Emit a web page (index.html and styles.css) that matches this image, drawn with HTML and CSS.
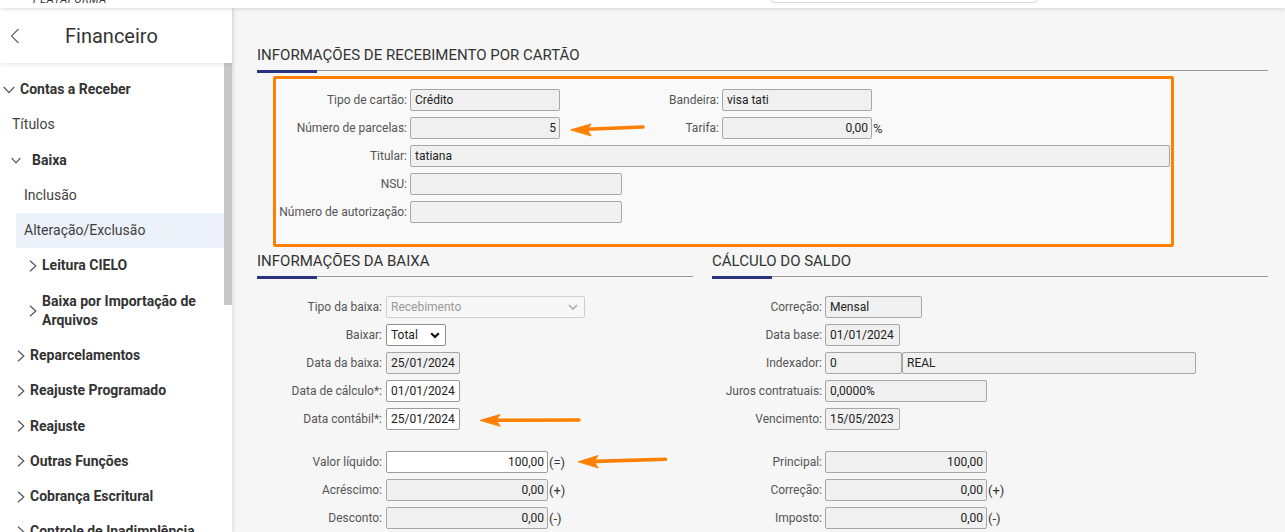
FILE: index.html
```html
<!DOCTYPE html>
<html lang="pt-BR">
<head>
<meta charset="utf-8">
<title>Financeiro</title>
<link rel="stylesheet" href="styles.css">
</head>
<body>
<header class="topbar">
  <span class="brand">PLATAFORMA</span>
  <div class="search"></div>
</header>
<div class="layout">
  <aside class="sidebar">
    <div class="side-head">
      <svg class="back" width="10" height="16" viewBox="0 0 10 16"><path d="M8.5 1 L1.5 8 L8.5 15" fill="none" stroke="#666" stroke-width="1.2"/></svg>
      <span class="side-title">Financeiro</span>
    </div>
    <div class="menu">
      <ul class="menu-list">
        <li class="item bold lv0"><svg class="chev-d" width="12" height="8" viewBox="0 0 12 8"><path d="M0.8 1 L6 6.6 L11.2 1" fill="none" stroke="#555" stroke-width="1.2"/></svg>Contas a Receber</li>
        <li class="item lv1">Títulos</li>
        <li class="item bold lv1b"><svg class="chev-d sm" width="10" height="7" viewBox="0 0 10 7"><path d="M0.7 1 L5 5.8 L9.3 1" fill="none" stroke="#555" stroke-width="1.2"/></svg>Baixa</li>
        <li class="item lv2">Inclusão</li>
        <li class="item lv2 active">Alteração/Exclusão</li>
        <li class="item bold lv3"><svg class="chev-r" width="8" height="12" viewBox="0 0 8 12"><path d="M1 0.8 L6.8 6 L1 11.2" fill="none" stroke="#555" stroke-width="1.2"/></svg>Leitura CIELO</li>
        <li class="item bold lv3"><svg class="chev-r" width="8" height="12" viewBox="0 0 8 12"><path d="M1 0.8 L6.8 6 L1 11.2" fill="none" stroke="#555" stroke-width="1.2"/></svg><span>Baixa por Importação de<br>Arquivos</span></li>
        <li class="item bold lv1c"><svg class="chev-r" width="8" height="12" viewBox="0 0 8 12"><path d="M1 0.8 L6.8 6 L1 11.2" fill="none" stroke="#555" stroke-width="1.2"/></svg>Reparcelamentos</li>
        <li class="item bold lv1c"><svg class="chev-r" width="8" height="12" viewBox="0 0 8 12"><path d="M1 0.8 L6.8 6 L1 11.2" fill="none" stroke="#555" stroke-width="1.2"/></svg>Reajuste Programado</li>
        <li class="item bold lv1c"><svg class="chev-r" width="8" height="12" viewBox="0 0 8 12"><path d="M1 0.8 L6.8 6 L1 11.2" fill="none" stroke="#555" stroke-width="1.2"/></svg>Reajuste</li>
        <li class="item bold lv1c"><svg class="chev-r" width="8" height="12" viewBox="0 0 8 12"><path d="M1 0.8 L6.8 6 L1 11.2" fill="none" stroke="#555" stroke-width="1.2"/></svg>Outras Funções</li>
        <li class="item bold lv1c"><svg class="chev-r" width="8" height="12" viewBox="0 0 8 12"><path d="M1 0.8 L6.8 6 L1 11.2" fill="none" stroke="#555" stroke-width="1.2"/></svg>Cobrança Escritural</li>
        <li class="item bold lv1c"><svg class="chev-r" width="8" height="12" viewBox="0 0 8 12"><path d="M1 0.8 L6.8 6 L1 11.2" fill="none" stroke="#555" stroke-width="1.2"/></svg>Controle de Inadimplência</li>
      </ul>
      <div class="track"><div class="thumb"></div></div>
    </div>
  </aside>

  <main class="main">
    <h2 class="sec-title">INFORMAÇÕES DE RECEBIMENTO POR CARTÃO</h2>
    <div class="card">
      <div class="row">
        <label class="lbl">Tipo de cartão:</label>
        <input class="field w150" readonly value="Crédito">
        <label class="lbl lbl2">Bandeira:</label>
        <input class="field w150" readonly value="visa tati">
      </div>
      <div class="row">
        <label class="lbl">Número de parcelas:</label>
        <input class="field w150 num" readonly value="5">
        <label class="lbl lbl2">Tarifa:</label>
        <input class="field w150 num" readonly value="0,00">
        <span class="suffix">%</span>
      </div>
      <div class="row">
        <label class="lbl">Titular:</label>
        <input class="field grow" readonly value="tatiana">
      </div>
      <div class="row">
        <label class="lbl">NSU:</label>
        <input class="field w212" readonly value="">
      </div>
      <div class="row">
        <label class="lbl">Número de autorização:</label>
        <input class="field w212" readonly value="">
      </div>
    </div>

    <div class="cols">
      <section class="col left">
        <h2 class="sec-title">INFORMAÇÕES DA BAIXA</h2>
        <div class="form">
          <div class="row">
            <label class="lbl">Tipo da baixa:</label>
            <div class="select disabled w198"><span>Recebimento</span><svg width="10" height="6" viewBox="0 0 10 6"><path d="M1 1 L5 5 L9 1" fill="none" stroke="#aaa" stroke-width="1.5"/></svg></div>
          </div>
          <div class="row">
            <label class="lbl">Baixar:</label>
            <div class="select w60"><span>Total</span><svg width="10" height="7" viewBox="0 0 10 7"><path d="M1.2 1.2 L5 5 L8.8 1.2" fill="none" stroke="#111" stroke-width="2.2"/></svg></div>
          </div>
          <div class="row">
            <label class="lbl">Data da baixa:</label>
            <input class="field w74" readonly value="25/01/2024">
          </div>
          <div class="row">
            <label class="lbl">Data de cálculo*:</label>
            <input class="field w74 white" value="01/01/2024">
          </div>
          <div class="row">
            <label class="lbl">Data contábil*:</label>
            <input class="field w74 white" value="25/01/2024">
          </div>
          <div class="row spaced">
            <label class="lbl">Valor líquido:</label>
            <input class="field w162 num white" value="100,00">
            <span class="suffix">(=)</span>
          </div>
          <div class="row">
            <label class="lbl">Acréscimo:</label>
            <input class="field w162 num" readonly value="0,00">
            <span class="suffix">(+)</span>
          </div>
          <div class="row">
            <label class="lbl">Desconto:</label>
            <input class="field w162 num" readonly value="0,00">
            <span class="suffix">(-)</span>
          </div>
        </div>
      </section>

      <section class="col right">
        <h2 class="sec-title">CÁLCULO DO SALDO</h2>
        <div class="form">
          <div class="row">
            <label class="lbl">Correção:</label>
            <input class="field w96" readonly value="Mensal">
          </div>
          <div class="row">
            <label class="lbl">Data base:</label>
            <input class="field w75" readonly value="01/01/2024">
          </div>
          <div class="row">
            <label class="lbl">Indexador:</label>
            <input class="field w77" readonly value="0">
            <input class="field w294" readonly value="REAL">
          </div>
          <div class="row">
            <label class="lbl">Juros contratuais:</label>
            <input class="field w162" readonly value="0,0000%">
          </div>
          <div class="row">
            <label class="lbl">Vencimento:</label>
            <input class="field w75" readonly value="15/05/2023">
          </div>
          <div class="row spaced">
            <label class="lbl">Principal:</label>
            <input class="field w162 num" readonly value="100,00">
          </div>
          <div class="row">
            <label class="lbl">Correção:</label>
            <input class="field w162 num" readonly value="0,00">
            <span class="suffix">(+)</span>
          </div>
          <div class="row">
            <label class="lbl">Imposto:</label>
            <input class="field w162 num" readonly value="0,00">
            <span class="suffix">(-)</span>
          </div>
        </div>
      </section>
    </div>
  </main>
</div>

<svg class="arrows" width="1285" height="532" viewBox="0 0 1285 532">
  <g fill="#ff8000" stroke="#ff8000" stroke-linecap="round" stroke-linejoin="round">
    <path d="M586 129.3 L643 127" stroke-width="3.6" fill="none"/>
    <path d="M571 129.8 L591 124 L587 129.6 L591 135.6 Z" stroke-width="1"/>
    <path d="M496 420.3 L579 420" stroke-width="3.6" fill="none"/>
    <path d="M480.5 420.3 L500 414.6 L496 420.3 L500 426 Z" stroke-width="1"/>
    <path d="M594 461.4 L665.5 459.2" stroke-width="3.6" fill="none"/>
    <path d="M578.5 461.7 L598 455.6 L594 461.5 L598 467.6 Z" stroke-width="1"/>
  </g>
</svg>
</body>
</html>
```

FILE: styles.css
```css
* { box-sizing: border-box; }

html, body {
  margin: 0;
  padding: 0;
}

body {
  width: 1285px;
  height: 532px;
  overflow: hidden;
  position: relative;
  background: #f6f6f6;
  color: #333;
  font-family: Roboto, "Liberation Sans", Arial, sans-serif;
}

/* ---------- top bar ---------- */
.topbar {
  position: relative;
  z-index: 3;
  height: 8px;
  background: #fff;
  box-shadow: 0 1px 4px rgba(0, 0, 0, 0.14);
  display: flex;
  padding-left: 33px;
  overflow: hidden;
}

.brand {
  font-size: 11px;
  font-style: italic;
  letter-spacing: 0.6px;
  line-height: 11px;
  margin-top: -6px;
  color: #333;
}

.search {
  margin-left: auto;
  margin-right: 248px;
  width: 266px;
  height: 23px;
  margin-top: -20px;
  border: 1px solid #dcdcdc;
  border-radius: 2px;
  background: #fff;
}

/* ---------- layout ---------- */
.layout {
  display: flex;
  height: 524px;
}

.sidebar {
  position: relative;
  z-index: 2;
  flex: none;
  width: 232px;
  background: #fff;
  box-shadow: 1px 0 4px rgba(0, 0, 0, 0.12);
  display: flex;
  flex-direction: column;
}

.side-head {
  position: relative;
  z-index: 1;
  flex: none;
  height: 55px;
  display: flex;
  align-items: center;
  box-shadow: 0 2px 4px rgba(0, 0, 0, 0.09);
}

.back {
  margin-left: 10px;
  flex: none;
}

.side-title {
  margin-left: 45px;
  font-size: 20px;
  color: #333;
}

.menu {
  flex: 1;
  display: grid;
  grid-template-columns: 224px 8px;
  overflow: hidden;
}

.menu-list {
  list-style: none;
  margin: 0;
  padding: 9px 0 0;
}

.track {
  background: #fff;
}

.thumb {
  height: 242px;
  background: #c8c8c8;
}

.item {
  display: flex;
  align-items: center;
  padding: 8px 0;
  line-height: 19.25px;
  font-size: 14px;
  color: #3f3f3f;
  white-space: nowrap;
}

.item.bold {
  font-weight: 700;
  color: #333;
}

.item svg { flex: none; }

.lv0 { padding-left: 3px; }
.lv0 .chev-d { margin-right: 5px; }

.lv1 { padding-left: 12px; }

.lv1b { padding-left: 11px; }
.lv1b .chev-d { margin-right: 11px; }

.lv2 { padding-left: 24px; }
.lv2.active {
  margin-left: 16px;
  padding-left: 8px;
  background: #edf2fa;
}

.lv3 { padding-left: 29px; }
.lv3 .chev-r { margin-right: 5px; }

.lv1c { padding-left: 17px; }
.lv1c .chev-r { margin-right: 5px; }

/* ---------- main ---------- */
.main {
  flex: 1;
  min-width: 0;
  padding: 37px 17px 0 25px;
}

.sec-title {
  position: relative;
  margin: 0;
  padding-bottom: 5px;
  border-bottom: 1px solid #999;
  font-size: 15px;
  line-height: 20px;
  font-weight: 400;
  color: #333;
}

.sec-title::after {
  content: "";
  position: absolute;
  left: 0;
  bottom: -3px;
  width: 60px;
  height: 3px;
  background: #29337f;
}

.card {
  margin: 5px 0 0 16px;
  width: 901px;
  border: 3px solid #ff8000;
  border-radius: 2px;
  background: #f9f9f9;
  padding: 10px 0 21px;
  display: flex;
  flex-direction: column;
  gap: 6px;
}

.row {
  display: flex;
  align-items: center;
  height: 22px;
}

.lbl {
  flex: none;
  font-size: 12px;
  color: #555;
  text-align: right;
}

.card .lbl { width: 131px; margin-right: 3px; }
.card .lbl2 { width: 159px; }

.field {
  flex: none;
  height: 22px;
  border: 1px solid #a6a6a6;
  border-radius: 2px;
  background: #f0f0f0;
  font: inherit;
  font-size: 12px;
  color: #222;
  padding: 0 4px;
  margin: 0;
  outline: none;
}

.field.num { text-align: right; padding-right: 3px; }
.field.white { background: #fff; border-color: #9a9a9a; }
.field.grow { flex: 1; margin-right: 1px; }

.w60 { width: 60px; }
.w74 { width: 74px; }
.w75 { width: 75px; }
.w77 { width: 77px; }
.w96 { width: 97px; }
.w150 { width: 150px; }
.w162 { width: 162px; }
.w198 { width: 199px; }
.w212 { width: 212px; }
.w294 { width: 294px; }

.suffix {
  margin-left: 1px;
  font-size: 13px;
  color: #333;
}

.cols {
  margin-top: 4px;
  display: grid;
  grid-template-columns: 436px 556px;
  column-gap: 19px;
}

.form {
  padding-top: 19px;
  display: flex;
  flex-direction: column;
  gap: 6px;
}

.row.spaced { margin-top: 15px; }

.left .lbl { width: 125px; margin-right: 4px; }
.right .lbl { width: 110px; margin-right: 3px; }

.select {
  flex: none;
  height: 22px;
  border: 1px solid #8f8f8f;
  border-radius: 2px;
  background: #fff;
  display: flex;
  align-items: center;
  justify-content: space-between;
  padding: 0 5px 0 4px;
  font-size: 12px;
  color: #222;
}

.select.disabled {
  border-color: #cfcfcf;
  background: #f7f7f7;
  color: #999;
  padding-right: 6px;
}

.arrows {
  position: absolute;
  left: 0;
  top: 0;
  pointer-events: none;
  z-index: 5;
}
```
